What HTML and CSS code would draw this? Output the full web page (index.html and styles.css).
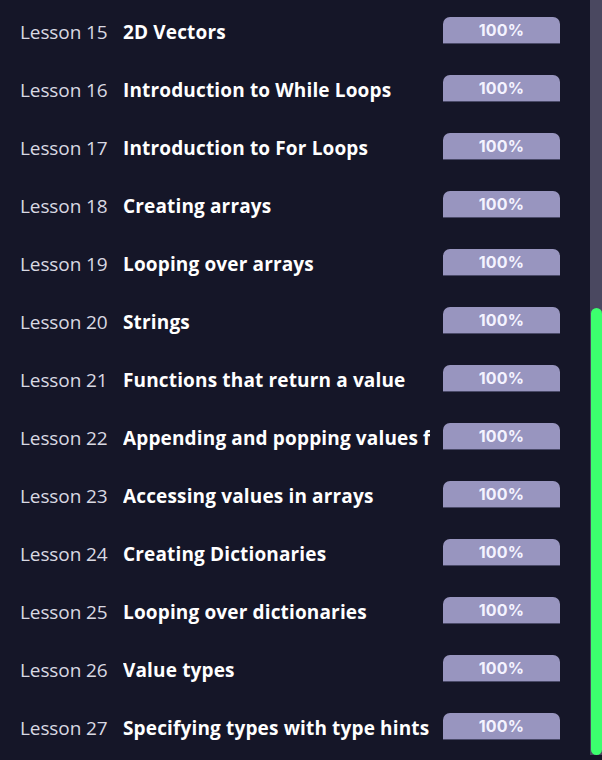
FILE: index.html
```html
<!DOCTYPE html>
<html>
<head>
<meta charset="utf-8">
<link rel="stylesheet" href="styles.css">
</head>
<body>
<div class="page">
  <div class="list">
    <div class="row"><span class="num">Lesson 15</span><span class="title">2D Vectors</span><span class="badge">100%</span></div>
    <div class="row"><span class="num">Lesson 16</span><span class="title">Introduction to While Loops</span><span class="badge">100%</span></div>
    <div class="row"><span class="num">Lesson 17</span><span class="title">Introduction to For Loops</span><span class="badge">100%</span></div>
    <div class="row"><span class="num">Lesson 18</span><span class="title">Creating arrays</span><span class="badge">100%</span></div>
    <div class="row"><span class="num">Lesson 19</span><span class="title">Looping over arrays</span><span class="badge">100%</span></div>
    <div class="row"><span class="num">Lesson 20</span><span class="title">Strings</span><span class="badge">100%</span></div>
    <div class="row"><span class="num">Lesson 21</span><span class="title">Functions that return a value</span><span class="badge">100%</span></div>
    <div class="row"><span class="num">Lesson 22</span><span class="title">Appending and popping values from arrays</span><span class="badge">100%</span></div>
    <div class="row"><span class="num">Lesson 23</span><span class="title">Accessing values in arrays</span><span class="badge">100%</span></div>
    <div class="row"><span class="num">Lesson 24</span><span class="title">Creating Dictionaries</span><span class="badge">100%</span></div>
    <div class="row"><span class="num">Lesson 25</span><span class="title">Looping over dictionaries</span><span class="badge">100%</span></div>
    <div class="row"><span class="num">Lesson 26</span><span class="title">Value types</span><span class="badge">100%</span></div>
    <div class="row"><span class="num">Lesson 27</span><span class="title">Specifying types with type hints</span><span class="badge">100%</span></div>
  </div>
  <div class="scrollbar"><div class="thumb"></div></div>
</div>
</body>
</html>
```

FILE: styles.css
```css
* { box-sizing: border-box; }
html, body {
  margin: 0;
  padding: 0;
  background: #151628;
  width: 602px;
  height: 760px;
  overflow: hidden;
}
.page {
  position: relative;
  width: 602px;
  height: 760px;
}
.list {
  display: flex;
  flex-direction: column;
  padding: 3px 30px 0 20px;
  width: 590px;
}
.row {
  display: flex;
  align-items: center;
  height: 58px;
  font-family: "Open Sans", sans-serif;
  font-size: 19px;
}
.num {
  width: 103px;
  flex: none;
  color: #d9d9e2;
  font-weight: 400;
  white-space: nowrap;
  letter-spacing: -0.1px;
}
.title {
  flex: 1;
  min-width: 0;
  overflow: hidden;
  white-space: nowrap;
  color: #ffffff;
  font-weight: 700;
  margin-right: 13px;
  letter-spacing: 0.15px;
}
.badge {
  flex: none;
  width: 117px;
  height: 27px;
  margin-bottom: 3px;
  background: #9895bf;
  border-radius: 7px 7px 0 0;
  border-bottom: 1px solid #4a4a68;
  color: #f4f3ff;
  font-family: "Inter", sans-serif;
  font-weight: 700;
  font-size: 16px;
  display: flex;
  align-items: center;
  justify-content: center;
  letter-spacing: 0.2px;
}
.scrollbar {
  position: absolute;
  left: 590px;
  top: 0;
  width: 12px;
  height: 755px;
  background: #4a4860;
}
.thumb {
  position: absolute;
  left: 1px;
  right: 0;
  top: 308px;
  bottom: 0;
  background: #3cff6e;
  border-radius: 6px;
}
```
